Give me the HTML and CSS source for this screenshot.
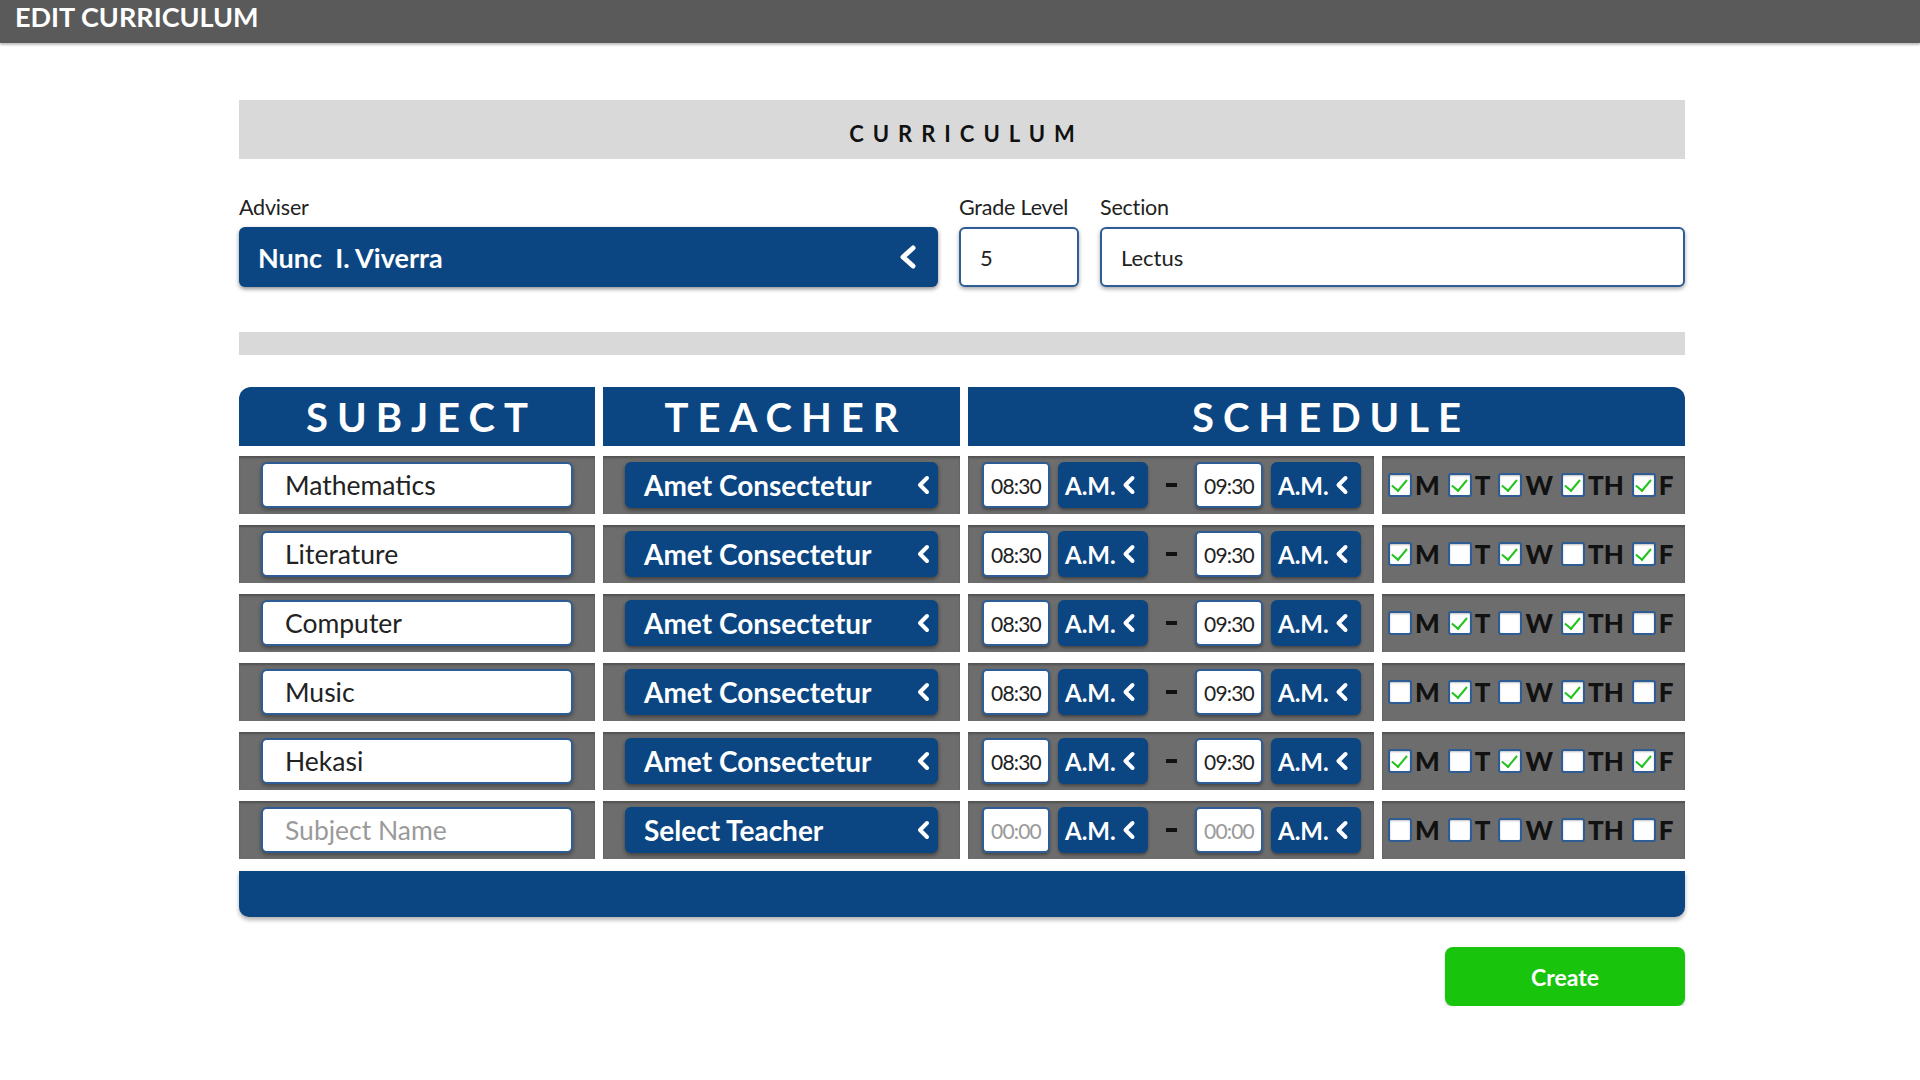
FILE: index.html
```html
<!DOCTYPE html>
<html lang="en">
<head>
<meta charset="utf-8">
<title>Edit Curriculum</title>
<link rel="stylesheet" href="styles.css">
</head>
<body>
<header class="topbar">EDIT CURRICULUM</header>
<main class="main">
  <div class="title-bar">CURRICULUM</div>

  <div class="fields">
    <div class="field field-adviser">
      <label class="label">Adviser</label>
      <div class="select select-lg"><span>Nunc&nbsp; I. Viverra</span>
        <svg class="chev chev-lg" viewBox="0 0 20 24"><polyline points="15,3 5,12 15,21"/></svg>
      </div>
    </div>
    <div class="field field-grade">
      <label class="label">Grade Level</label>
      <div class="input input-lg">5</div>
    </div>
    <div class="field field-section">
      <label class="label">Section</label>
      <div class="input input-lg input-section">Lectus</div>
    </div>
  </div>

  <div class="sep-bar"></div>

  <div class="table">
    <div class="th th-subject"><span>SUBJECT</span></div>
    <div class="th th-teacher"><span>TEACHER</span></div>
    <div class="th th-schedule"><span>SCHEDULE</span></div>

    <!-- row 1 -->
    <div class="td"><div class="input input-row">Mathematics</div></div>
    <div class="td"><div class="select select-row"><span>Amet Consectetur</span><svg class="chev" viewBox="0 0 14 20"><polyline points="11,3 4,10 11,17"/></svg></div></div>
    <div class="td td-time">
      <div class="time">08:30</div><div class="ampm">A.M.<svg class="chev chev-sm" viewBox="0 0 14 20"><polyline points="11,3 4,10 11,17"/></svg></div>
      <div class="dash"></div>
      <div class="time">09:30</div><div class="ampm">A.M.<svg class="chev chev-sm" viewBox="0 0 14 20"><polyline points="11,3 4,10 11,17"/></svg></div>
    </div>
    <div class="td td-days">
      <span class="cb on"></span><span class="day">M</span>
      <span class="cb on"></span><span class="day">T</span>
      <span class="cb on"></span><span class="day">W</span>
      <span class="cb on"></span><span class="day">TH</span>
      <span class="cb on"></span><span class="day">F</span>
    </div>

    <!-- row 2 -->
    <div class="td"><div class="input input-row">Literature</div></div>
    <div class="td"><div class="select select-row"><span>Amet Consectetur</span><svg class="chev" viewBox="0 0 14 20"><polyline points="11,3 4,10 11,17"/></svg></div></div>
    <div class="td td-time">
      <div class="time">08:30</div><div class="ampm">A.M.<svg class="chev chev-sm" viewBox="0 0 14 20"><polyline points="11,3 4,10 11,17"/></svg></div>
      <div class="dash"></div>
      <div class="time">09:30</div><div class="ampm">A.M.<svg class="chev chev-sm" viewBox="0 0 14 20"><polyline points="11,3 4,10 11,17"/></svg></div>
    </div>
    <div class="td td-days">
      <span class="cb on"></span><span class="day">M</span>
      <span class="cb"></span><span class="day">T</span>
      <span class="cb on"></span><span class="day">W</span>
      <span class="cb"></span><span class="day">TH</span>
      <span class="cb on"></span><span class="day">F</span>
    </div>

    <!-- row 3 -->
    <div class="td"><div class="input input-row">Computer</div></div>
    <div class="td"><div class="select select-row"><span>Amet Consectetur</span><svg class="chev" viewBox="0 0 14 20"><polyline points="11,3 4,10 11,17"/></svg></div></div>
    <div class="td td-time">
      <div class="time">08:30</div><div class="ampm">A.M.<svg class="chev chev-sm" viewBox="0 0 14 20"><polyline points="11,3 4,10 11,17"/></svg></div>
      <div class="dash"></div>
      <div class="time">09:30</div><div class="ampm">A.M.<svg class="chev chev-sm" viewBox="0 0 14 20"><polyline points="11,3 4,10 11,17"/></svg></div>
    </div>
    <div class="td td-days">
      <span class="cb"></span><span class="day">M</span>
      <span class="cb on"></span><span class="day">T</span>
      <span class="cb"></span><span class="day">W</span>
      <span class="cb on"></span><span class="day">TH</span>
      <span class="cb"></span><span class="day">F</span>
    </div>

    <!-- row 4 -->
    <div class="td"><div class="input input-row">Music</div></div>
    <div class="td"><div class="select select-row"><span>Amet Consectetur</span><svg class="chev" viewBox="0 0 14 20"><polyline points="11,3 4,10 11,17"/></svg></div></div>
    <div class="td td-time">
      <div class="time">08:30</div><div class="ampm">A.M.<svg class="chev chev-sm" viewBox="0 0 14 20"><polyline points="11,3 4,10 11,17"/></svg></div>
      <div class="dash"></div>
      <div class="time">09:30</div><div class="ampm">A.M.<svg class="chev chev-sm" viewBox="0 0 14 20"><polyline points="11,3 4,10 11,17"/></svg></div>
    </div>
    <div class="td td-days">
      <span class="cb"></span><span class="day">M</span>
      <span class="cb on"></span><span class="day">T</span>
      <span class="cb"></span><span class="day">W</span>
      <span class="cb on"></span><span class="day">TH</span>
      <span class="cb"></span><span class="day">F</span>
    </div>

    <!-- row 5 -->
    <div class="td"><div class="input input-row">Hekasi</div></div>
    <div class="td"><div class="select select-row"><span>Amet Consectetur</span><svg class="chev" viewBox="0 0 14 20"><polyline points="11,3 4,10 11,17"/></svg></div></div>
    <div class="td td-time">
      <div class="time">08:30</div><div class="ampm">A.M.<svg class="chev chev-sm" viewBox="0 0 14 20"><polyline points="11,3 4,10 11,17"/></svg></div>
      <div class="dash"></div>
      <div class="time">09:30</div><div class="ampm">A.M.<svg class="chev chev-sm" viewBox="0 0 14 20"><polyline points="11,3 4,10 11,17"/></svg></div>
    </div>
    <div class="td td-days">
      <span class="cb on"></span><span class="day">M</span>
      <span class="cb"></span><span class="day">T</span>
      <span class="cb on"></span><span class="day">W</span>
      <span class="cb"></span><span class="day">TH</span>
      <span class="cb on"></span><span class="day">F</span>
    </div>

    <!-- row 6 (new) -->
    <div class="td"><div class="input input-row placeholder">Subject Name</div></div>
    <div class="td"><div class="select select-row"><span>Select Teacher</span><svg class="chev" viewBox="0 0 14 20"><polyline points="11,3 4,10 11,17"/></svg></div></div>
    <div class="td td-time">
      <div class="time placeholder">00:00</div><div class="ampm">A.M.<svg class="chev chev-sm" viewBox="0 0 14 20"><polyline points="11,3 4,10 11,17"/></svg></div>
      <div class="dash"></div>
      <div class="time placeholder">00:00</div><div class="ampm">A.M.<svg class="chev chev-sm" viewBox="0 0 14 20"><polyline points="11,3 4,10 11,17"/></svg></div>
    </div>
    <div class="td td-days">
      <span class="cb"></span><span class="day">M</span>
      <span class="cb"></span><span class="day">T</span>
      <span class="cb"></span><span class="day">W</span>
      <span class="cb"></span><span class="day">TH</span>
      <span class="cb"></span><span class="day">F</span>
    </div>

    <div class="tfoot"></div>
  </div>

  <div class="actions">
    <button class="btn-create">Create</button>
  </div>
</main>
</body>
</html>
```

FILE: styles.css
```css
* { box-sizing: border-box; }

body {
  margin: 0;
  background: #ffffff;
  font-family: Lato, "Open Sans", "Liberation Sans", sans-serif;
  color: #1a1a1a;
}

.topbar {
  height: 43px;
  background: #5a5a5a;
  color: #ffffff;
  font-weight: 700;
  font-size: 27px;
  line-height: 30px;
  padding: 2px 0 0 15px;
  box-shadow: 0 2px 2px rgba(0,0,0,0.25);
}

.main {
  width: 1446px;
  margin: 57px 0 0 239px;
}

.title-bar {
  height: 59px;
  background: #d9d9d9;
  display: flex;
  align-items: center;
  justify-content: center;
  font-weight: 700;
  font-size: 22px;
  letter-spacing: 9px;
  padding: 7px 0 0 9px;
  color: #111;
}

.fields {
  display: flex;
  gap: 21px;
  margin-top: 36px;
}
.field { display: flex; flex-direction: column; }
.field-adviser { width: 699px; }
.field-grade { width: 120px; }
.field-section { flex: 1; }

.label {
  font-size: 21.5px;
  line-height: 24px;
  height: 32px;
  color: #222;
  letter-spacing: -0.2px;
}

.select {
  background: #0b4682;
  color: #fff;
  font-weight: 700;
  display: flex;
  align-items: center;
  justify-content: space-between;
  border-radius: 6px;
  box-shadow: 0 2px 4px rgba(0,0,0,0.45);
}
.select-lg {
  height: 60px;
  font-size: 27px;
  padding: 0 20px 0 19px;
}

.chev { width: 14px; height: 20px; flex: none; }
.chev polyline {
  fill: none;
  stroke: #fff;
  stroke-width: 4;
  stroke-linecap: round;
  stroke-linejoin: round;
}
.chev-lg { width: 20px; height: 24px; }
.chev-lg polyline { stroke-width: 5; }

.input {
  background: #fff;
  border: 2px solid #2d5d94;
  border-radius: 6px;
  box-shadow: 0 2px 4px rgba(0,0,0,0.35);
  display: flex;
  align-items: center;
  color: #222;
}
.input-lg {
  height: 60px;
  font-size: 22px;
  padding-left: 19px;
}

.sep-bar {
  height: 23px;
  background: #d9d9d9;
  margin-top: 45px;
}

.table {
  margin-top: 32px;
  display: grid;
  grid-template-columns: 356px 357px 406px 303px;
  column-gap: 8px;
  row-gap: 11px;
}

.th {
  height: 59px;
  background: #0b4682;
  color: #fff;
  font-weight: 700;
  font-size: 40px;
  letter-spacing: 9px;
  display: flex;
  align-items: center;
  justify-content: center;
  margin-bottom: -1px;
}
.th span { padding-left: 9px; }
.th-subject { border-radius: 12px 0 0 0; }
.th-schedule { grid-column: span 2; border-radius: 0 12px 0 0; }

.td {
  height: 58px;
  background: #6d6d6d;
  box-shadow: inset 0 2px 2px rgba(0,0,0,0.25);
  padding: 6px 22px;
  display: flex;
  align-items: center;
}

.input-row {
  width: 100%;
  height: 46px;
  font-size: 26.5px;
  padding-left: 22px;
}
.placeholder { color: #9a9a9a; }

.select-row {
  width: 100%;
  height: 46px;
  font-size: 28px;
  padding: 0 8px 0 19px;
}

.td-time {
  padding: 6px 13px 6px 14px;
  gap: 8px;
}
.time {
  width: 68px;
  height: 46px;
  background: #fff;
  border: 2px solid #2d5d94;
  border-radius: 5px;
  box-shadow: 0 2px 3px rgba(0,0,0,0.35);
  font-size: 21px;
  font-weight: 400;
  color: #222;
  display: flex;
  align-items: center;
  justify-content: center;
  letter-spacing: -0.8px;
}
.time.placeholder { color: #999; }
.ampm {
  width: 90px;
  height: 46px;
  background: #0b4682;
  color: #fff;
  border-radius: 6px;
  box-shadow: 0 2px 3px rgba(0,0,0,0.35);
  font-weight: 700;
  font-size: 24px;
  display: flex;
  align-items: center;
  padding-left: 7px;
  gap: 5px;
}
.chev-sm { width: 15px; height: 20px; }
.chev-sm polyline { stroke-width: 4; }
.dash {
  width: 31px;
  height: 4px;
  flex: none;
}
.dash::after {
  content: "";
  display: block;
  width: 11px;
  height: 4px;
  margin: 0 auto;
  background: #111;
}

.td-days {
  padding: 6px;
  gap: 0;
}
.cb {
  width: 24px;
  height: 24px;
  flex: none;
  background: #fff;
  border: 2px solid #2d5d94;
  border-radius: 3px;
  box-shadow: inset 0 1px 2px rgba(0,0,0,0.25);
  position: relative;
  margin-right: 3px;
}
.cb.on::after {
  content: "";
  position: absolute;
  left: 5px;
  top: 1px;
  width: 7px;
  height: 13px;
  border-right: 2.5px solid #22c31e;
  border-bottom: 2.5px solid #22c31e;
  transform: rotate(40deg);
}
.day {
  font-weight: 900;
  font-size: 26px;
  color: #111;
  margin-right: 8px;
}
.day:last-child { margin-right: 0; }

.tfoot {
  grid-column: 1 / -1;
  height: 46px;
  background: #0b4682;
  border-radius: 0 0 10px 10px;
  box-shadow: 0 3px 4px rgba(0,0,0,0.3);
  margin-top: 1px;
}

.actions {
  display: flex;
  justify-content: flex-end;
  margin-top: 30px;
}
.btn-create {
  width: 240px;
  height: 59px;
  border: none;
  border-radius: 8px;
  background: #18c40c;
  color: #fff;
  font-family: Lato, "Open Sans", sans-serif;
  font-weight: 700;
  font-size: 23px;
  box-shadow: 0 2px 3px rgba(0,0,0,0.2);
}
```
